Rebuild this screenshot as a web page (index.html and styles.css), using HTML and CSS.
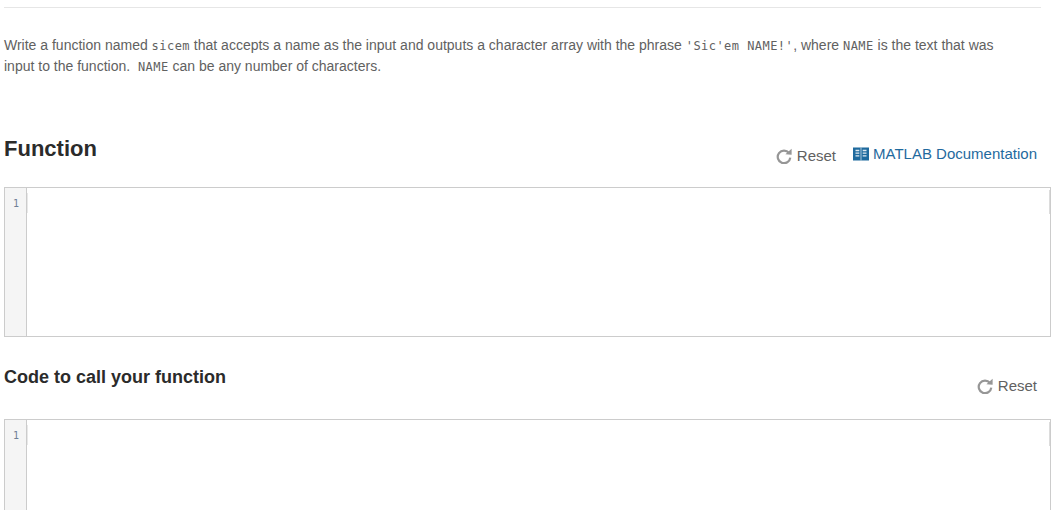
FILE: index.html
```html
<!DOCTYPE html>
<html lang="en">
<head>
    <meta charset="UTF-8">
    <meta name="viewport" content="width=device-width, initial-scale=1.0">
    <title>Function problem</title>
    <link rel="stylesheet" href="styles.css">
</head>
<body>

    <hr class="rule">

    <!-- Problem description -->
    <p class="description">Write a function named <code>sicem</code> that accepts a name as the input and outputs a character array with the phrase <code>'Sic'em NAME!'</code>, where <code>NAME</code> is the text that was input to the function.&nbsp; <code>NAME</code> can be any number of characters.</p>

    <!-- Function editor -->
    <div class="section-head function-head">
        <h2 class="title-large">Function</h2>
        <div class="actions">
            <a class="reset">
                <svg viewBox="0 0 16 16" width="16" height="16"><path d="M13 5A6.3 6.3 0 1 0 14.3 9.6" fill="none" stroke="#969696" stroke-width="2.2"/><path d="M9.4 6.2L15.6 6.8V0.8Z" fill="#969696"/></svg>
                Reset
            </a>
            <a class="doc-link">
                <svg viewBox="0 0 16 14" width="16" height="14"><rect x="0" y="0.5" width="16" height="13" fill="#1f6a9e"/><rect x="7.6" y="0.5" width="0.8" height="13" fill="#cfe0ec"/><path d="M2.5 3.5h3.8M2.5 6.2h3.8M2.5 8.9h3.8M9.7 3.5h3.8M9.7 6.2h3.8M9.7 8.9h3.8" stroke="#dfe9f1" stroke-width="1.3"/></svg>
                MATLAB Documentation
            </a>
        </div>
    </div>
    <div class="editor">
        <div class="gutter">1</div>
        <div class="cursor-line"></div>
        <div class="edge-line"></div>
    </div>

    <!-- Calling code editor -->
    <div class="section-head call-head">
        <h3 class="title-small">Code to call your function</h3>
        <div class="actions">
            <a class="reset">
                <svg viewBox="0 0 16 16" width="16" height="16"><path d="M13 5A6.3 6.3 0 1 0 14.3 9.6" fill="none" stroke="#969696" stroke-width="2.2"/><path d="M9.4 6.2L15.6 6.8V0.8Z" fill="#969696"/></svg>
                Reset
            </a>
        </div>
    </div>
    <div class="editor">
        <div class="gutter">1</div>
        <div class="cursor-line"></div>
        <div class="edge-line"></div>
    </div>

</body>
</html>
```

FILE: styles.css
```css
html, body {
    height: 510px;
    overflow: hidden;
}

body {
    font-family: "Liberation Sans", Arial, sans-serif;
    background-color: #fff;
    color: #616161;
    margin: 0;
    padding: 7px 13px 0 4px;
}

.rule {
    border: none;
    border-top: 1px solid #e6e6e6;
    margin: 0 10px 0 0;
}

.description {
    font-size: 14px;
    line-height: 21px;
    margin: 27px 0 0 0;
    padding-right: 40px;
}

code {
    font-family: "DejaVu Sans Mono", monospace;
    font-size: 12px;
    line-height: 1;
    letter-spacing: 0.45px;
    color: #616161;
}

/* Section headers */
.section-head {
    display: flex;
    justify-content: space-between;
}

.function-head {
    height: 56px;
    margin-top: 54px;
}

.call-head {
    height: 55px;
    margin-top: 27px;
}

.title-large {
    font-size: 22px;
    line-height: 36px;
    margin: 0;
    color: #2b2b2b;
}

.title-small {
    font-size: 18px;
    line-height: 26px;
    margin: 0;
    color: #2b2b2b;
}

.actions {
    display: flex;
    align-items: flex-start;
    gap: 17px;
    padding-right: 14px;
    font-size: 15px;
    line-height: 20px;
}

.function-head .actions {
    padding-top: 14px;
}

.call-head .actions {
    padding-top: 11px;
}

.reset {
    color: #616161;
    display: flex;
    align-items: center;
    gap: 5px;
    padding-top: 1px;
}

.doc-link {
    color: #1f6a9e;
    display: flex;
    align-items: center;
    gap: 4px;
    height: 18px;
}

/* Code editors */
.editor {
    height: 148px;
    border: 1px solid #ccc;
    display: flex;
    background-color: #fff;
}

.gutter {
    width: 22px;
    background-color: #f5f5f5;
    border-right: 1px solid #ccc;
    font-family: "DejaVu Sans Mono", monospace;
    font-size: 10px;
    line-height: 16px;
    padding-top: 8px;
    padding-left: 8px;
    box-sizing: border-box;
    color: #6f7f96;
}

.cursor-line {
    width: 1px;
    height: 20px;
    margin-top: 5px;
    background-color: #e8e8e8;
}

.edge-line {
    width: 1px;
    height: 24px;
    margin-top: 2px;
    margin-left: auto;
    background-color: #dcdcdc;
}
```
